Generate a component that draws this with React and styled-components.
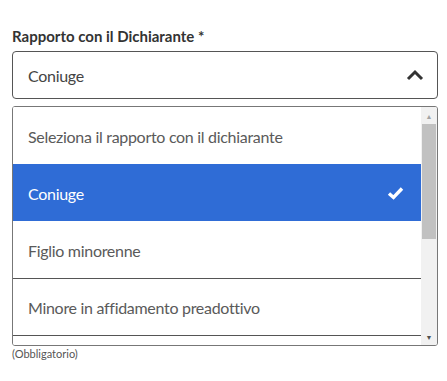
import React from "react";
import styled, {createGlobalStyle} from "styled-components";

const GlobalStyle = createGlobalStyle`
  html, body {
    margin: 0;
    padding: 0;
    background: #fff;
    font-family: Lato, "Noto Sans", sans-serif;
  }
`;

// the last entry is scrolled out of view, only its top edge shows
const options = [
  "Seleziona il rapporto con il dichiarante",
  "Coniuge",
  "Figlio minorenne",
  "Minore in affidamento preadottivo",
  "",
];

const App = () => {
  const selected = "Coniuge";
  const activeIndex = options.indexOf(selected);

  return (
      <>
        <GlobalStyle/>
        <Wrapper>
          <Label>Rapporto con il Dichiarante *</Label>
          <SelectBox>
            <SelectValue>{selected}</SelectValue>
            <svg width="18" height="12" viewBox="0 0 18 12">
              <path d="M2 10 L9 3 L16 10" fill="none" stroke="#333" strokeWidth="3"/>
            </svg>
          </SelectBox>
          <Menu>
            <OptionList>
              {options.map((opt, i) => (
                  <Option
                      key={i}
                      $active={i === activeIndex}
                      $line={i > 0 && i !== activeIndex && i !== activeIndex + 1}
                  >
                    <span>{opt}</span>
                    {i === activeIndex && (
                        <svg width="17" height="14" viewBox="0 0 17 14">
                          <path d="M2 7.5 L6.5 11.5 L15 2.5" fill="none" stroke="#fff" strokeWidth="3.4"/>
                        </svg>
                    )}
                  </Option>
              ))}
            </OptionList>
            <Scrollbar>
              <Arrow>▲</Arrow>
              <Track>
                <Thumb/>
              </Track>
              <Arrow $dark>▼</Arrow>
            </Scrollbar>
          </Menu>
          <Hint>(Obbligatorio)</Hint>
        </Wrapper>
      </>
  );
};

export default App;

const Wrapper = styled.div`
  padding: 26px 9px 0 12px;
`;

const Label = styled.div`
  font-size: 15px;
  font-weight: 700;
  color: #333;
  line-height: 20px;
  margin-bottom: 5px;
`;

const SelectBox = styled.div`
  height: 46px;
  border: 1px solid #555;
  border-radius: 4px;
  display: flex;
  align-items: center;
  justify-content: space-between;
  padding: 0 13px 0 15px;
`;

const SelectValue = styled.span`
  font-size: 16px;
  color: #444;
  letter-spacing: -0.3px;
`;

const Menu = styled.div`
  margin-top: 7px;
  height: 238px;
  border: 1px solid #777;
  border-radius: 3px;
  display: flex;
  overflow: hidden;
`;

const OptionList = styled.div`
  flex: 1;
  overflow: hidden;
`;

const Option = styled.div`
  height: 56px;
  display: flex;
  align-items: center;
  justify-content: space-between;
  padding: 0 17px 0 15px;
  font-size: 16px;
  letter-spacing: -0.3px;
  color: ${p => (p.$active ? "#fff" : "#5a5a5a")};
  background: ${p => (p.$active ? "#2f6cd6" : "#fff")};
  border-top: 1px solid ${p => (p.$line ? "#555" : p.$active ? "#2f6cd6" : "#fff")};
`;

const Scrollbar = styled.div`
  width: 16px;
  background: #f1f1f1;
  display: flex;
  flex-direction: column;
`;

const Arrow = styled.div`
  height: 17px;
  font-size: 7px;
  color: ${p => (p.$dark ? "#505050" : "#a3a3a3")};
  display: flex;
  align-items: center;
  justify-content: center;
`;

const Track = styled.div`
  flex: 1;
`;

const Thumb = styled.div`
  margin: 0 1px;
  height: 115px;
  background: #c1c1c1;
`;

const Hint = styled.div`
  font-size: 11px;
  line-height: 14px;
  color: #555;
  margin-top: 1px;
`;
